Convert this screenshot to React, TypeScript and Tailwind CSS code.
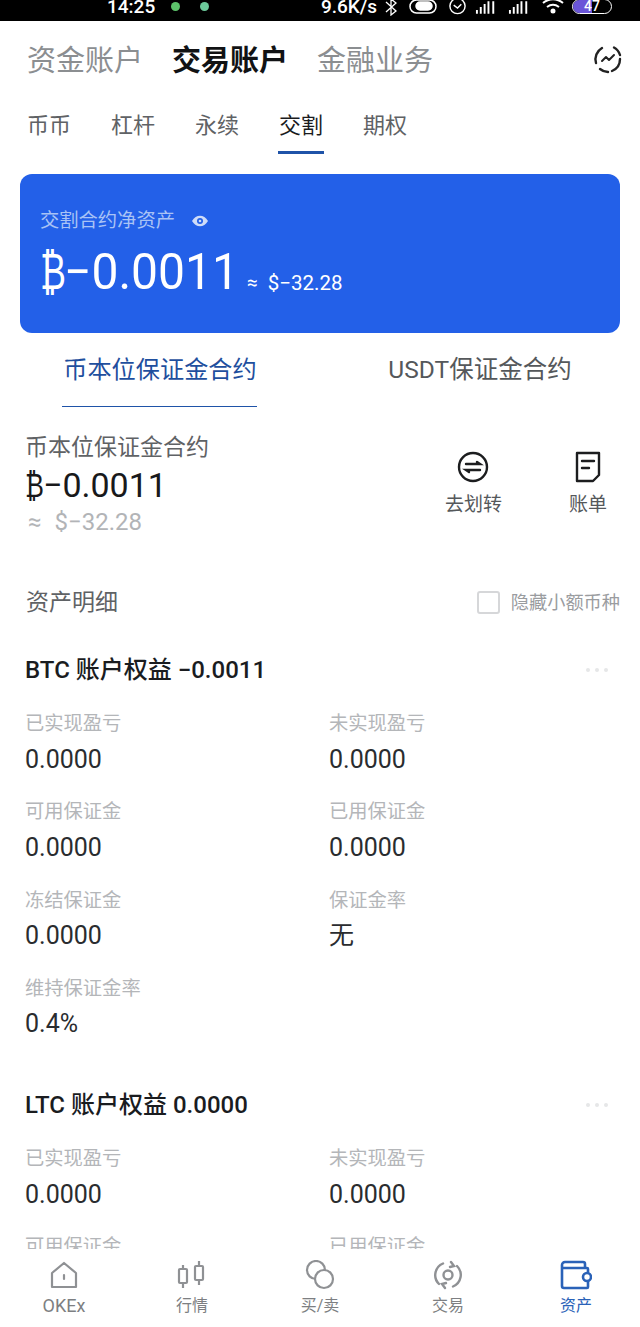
import React from "react";

const font = { fontFamily: '"Roboto","Noto Sans CJK SC","DejaVu Sans",sans-serif' };

function Metric({ label, value }: { label: string; value: string }) {
  return (
    <div className="h-[88.3px]">
      <div className="h-[30px] text-[19.3px] leading-[30px] text-[#b4b6b9]">{label}</div>
      <div className="mt-[5.5px] h-[30px] text-[25px] leading-[30px] text-[#2a2c2f]">{value}</div>
    </div>
  );
}

function Account({ title, items }: { title: string; items: [string, string][] }) {
  return (
    <section>
      <div className="flex h-[36px] items-center justify-between pr-[30px]">
        <div className="text-[24px] font-medium leading-[36px] text-[#1a1c1f]">{title}</div>
        <div className="flex gap-[5px] pr-[2px]">
          <span className="h-[4px] w-[4px] rounded-full bg-[#e6e7e8]" />
          <span className="h-[4px] w-[4px] rounded-full bg-[#e6e7e8]" />
          <span className="h-[4px] w-[4px] rounded-full bg-[#e6e7e8]" />
        </div>
      </div>
      <div className="mt-[21px] grid grid-cols-[304px_1fr]">
        {items.map(([l, v], i) => (
          <Metric key={i} label={l} value={v} />
        ))}
      </div>
    </section>
  );
}

function StatusBar() {
  return (
    <div className="relative h-[21px] shrink-0 overflow-hidden bg-black text-white">
      <div className="flex h-[13px] items-center justify-between pl-[107px] pr-[28px] text-[19px] font-medium leading-[13px]">
        <div className="flex items-center">
          <span>14:25</span>
          <span className="ml-[16px] h-[9px] w-[9px] rounded-full bg-[#5cc26a]" />
          <span className="ml-[20px] h-[9px] w-[9px] rounded-full bg-[#6cc99a]" />
        </div>
        <div className="flex items-center">
          <span>9.6K/s</span>
          <svg className="ml-[7px]" width="14" height="18" viewBox="0 0 14 18" fill="none" stroke="#fff" strokeWidth="1.3"><path d="M2 4l10 9-5 4V1l5 4-10 9" /></svg>
          <svg className="ml-[11px]" width="28" height="16" viewBox="0 0 28 16" fill="none" stroke="#fff" strokeWidth="1.5"><rect x="1" y="1" width="26" height="13" rx="6.5" /><rect x="7" y="3" width="16" height="8" rx="4" fill="#fff" /></svg>
          <svg className="ml-[11px]" width="19" height="18" viewBox="0 0 20 18" fill="none" stroke="#fff" strokeWidth="1.5"><circle cx="10" cy="8" r="8" /><path d="M6 7l4 3 4-4" /></svg>
          <svg className="ml-[8px]" width="25" height="14" viewBox="0 0 26 14" fill="#fff"><path d="M1 10h2v4H1zM5 7h2v7H5zM9 4h2v10H9zM13 1h2v13h-2zM18 1h2v13h-2z" /></svg>
          <svg className="ml-[8px]" width="25" height="14" viewBox="0 0 26 14" fill="#fff"><path d="M1 10h2v4H1zM5 7h2v7H5zM9 4h2v10H9zM13 1h2v13h-2zM18 1h2v13h-2z" /></svg>
          <svg className="ml-[8px]" width="26" height="18" viewBox="0 0 26 18" fill="none" stroke="#fff" strokeWidth="2"><path d="M2 5c6-5 14-5 20 0M6 9c4-3 8-3 12 0" /><circle cx="12" cy="13" r="1.5" fill="#fff" /></svg>
          <div className="relative ml-[5px] flex h-[15px] w-[40px] items-center justify-center overflow-hidden rounded-[8px] border border-white text-[14px] leading-[13px]">
            <span className="absolute bottom-0 left-0 top-0 w-[19px] bg-[#6a55d8]" />
            <span className="relative">47</span>
          </div>
        </div>
      </div>
    </div>
  );
}

function Nav({ label, active, wide, children }: { label: string; active?: boolean; wide?: boolean; children: React.ReactNode }) {
  return (
    <div className="flex flex-col items-center">
      <div className="flex h-[36px] items-center justify-center">{children}</div>
      <div className={`mt-[2px] leading-[22px] ${wide ? "text-[18px]" : "text-[16px]"} ${active ? "text-[#2a62b8]" : "text-[#7d7f82]"}`}>{label}</div>
    </div>
  );
}

export default function App() {
  return (
    <div style={font} className="flex h-[1327px] w-[640px] flex-col overflow-hidden bg-white">
      <StatusBar />
      <header className="flex h-[77px] shrink-0 items-center justify-between pl-[27px] pr-[17px] pt-[2px]">
        <div className="flex gap-[29px] text-[29px] leading-[40px]">
          <span className="text-[#8b8e91]">资金账户</span>
          <span className="font-bold text-[#111214]">交易账户</span>
          <span className="text-[#8b8e91]">金融业务</span>
        </div>
        <svg className="-translate-y-[2px]" width="30" height="30" viewBox="0 0 30 30" fill="none" stroke="#222" strokeWidth="2.4" strokeLinecap="round" strokeLinejoin="round">
          <path d="M3 19A13 13 0 0 1 9 4M21 3.5A13 13 0 0 1 27 11M27 15A13 13 0 0 1 19 27M15 28A13 13 0 0 1 7 25" />
          <path d="M9 17l4-4 3 3 5-5" strokeWidth="2" />
        </svg>
      </header>
      <nav className="flex h-[56px] shrink-0 gap-[40px] pl-[27px] text-[22px] leading-[56px] text-[#5f6265]">
        <span>币币</span>
        <span>杠杆</span>
        <span>永续</span>
        <span className="relative h-[56px] text-[#1a1b1d]">
          交割
          <span className="absolute bottom-0 left-[-1px] right-[-1px] h-[3px] bg-[#1f53a8]" />
        </span>
        <span>期权</span>
      </nav>
      <div className="mx-[20px] mt-[20px] h-[159px] shrink-0 rounded-[12px] bg-[#2360e8] pl-[20px] text-white">
        <div className="flex h-[24px] translate-y-[35px] items-center text-[19.3px] leading-[24px] text-[#a9c3f5]">
          交割合约净资产
          <svg className="ml-[16px]" width="18" height="14" viewBox="0 0 18 14"><path d="M1 7c4-7 12-7 16 0-4 7-12 7-16 0z" fill="#cfdcf8" /><circle cx="9" cy="7" r="3" fill="#2360e8" /><circle cx="9" cy="7" r="1.3" fill="#cfdcf8" /></svg>
        </div>
        <div className="mt-[44px] flex h-[60px] items-baseline">
          <span className="inline-block w-[24px] origin-left scale-x-[0.7] text-[50px] leading-[60px]">₿</span>
          <span className="inline-block w-[171px] origin-left scale-x-[0.96] whitespace-nowrap text-[50px] leading-[60px]">−0.0011</span>
          <span className="ml-[12px] text-[19px]">≈</span>
          <span className="ml-[10px] translate-y-[1px] text-[20.5px]">$−32.28</span>
        </div>
      </div>
      <div className="grid h-[71px] shrink-0 grid-cols-2">
        <div className="relative flex justify-center text-[24.2px] leading-[74px] text-[#1f4f9e]">
          币本位保证金合约
          <span className="absolute bottom-0 left-[62px] h-[1px] w-[195px] bg-[#1f53a8]" />
        </div>
        <div className="flex justify-center text-[24.5px] leading-[74px] text-[#55585b]">USDT保证金合约</div>
      </div>
      <div className="flex h-[166px] shrink-0 items-start justify-between pl-[25px] pr-[33px]">
        <div className="pt-[29px]">
          <div className="text-[23px] leading-[30px] text-[#5f6265]">币本位保证金合约</div>
          <div className="flex h-[44px] items-baseline text-[34px] leading-[44px] text-[#18191b]">
            <span className="inline-block w-[18px] origin-left scale-x-[0.75]">₿</span>
            <span className="whitespace-nowrap">−0.0011</span>
          </div>
          <div className="flex text-[24px] leading-[30px] text-[#b2b4b7]">
            <span className="ml-[3px]">≈</span>
            <span className="ml-[13px]">$−32.28</span>
          </div>
        </div>
        <div className="flex gap-[67px] pt-[47px] text-[19px] leading-[24px] text-[#55585b]">
          <div className="flex flex-col items-center">
            <svg width="32" height="32" viewBox="0 0 32 32" fill="none" stroke="#1c1d1f" strokeWidth="2.4"><circle cx="16" cy="16" r="14" /><path d="M9 13h14l-3-2M23 19H9l3 2" strokeLinecap="round" /></svg>
            <span className="mt-[10px]">去划转</span>
          </div>
          <div className="flex flex-col items-center">
            <svg width="28" height="32" viewBox="0 0 28 32" fill="none" stroke="#1c1d1f" strokeWidth="2.4" strokeLinejoin="round"><path d="M3 2h22v22l-6 6H3z" /><path d="M8 10h12M8 17h7" strokeLinecap="round" /></svg>
            <span className="mt-[10px]">账单</span>
          </div>
        </div>
      </div>
      <div className="flex h-[66px] shrink-0 items-center justify-between pl-[26px] pr-[20px]">
        <span className="text-[23px] text-[#5f6265]">资产明细</span>
        <div className="flex items-center gap-[11px] text-[18.2px] text-[#9a9c9f]">
          <span className="h-[23px] w-[23px] rounded-[3px] border-2 border-[#d6d7d9]" />
          隐藏小额币种
        </div>
      </div>
      <main className="min-h-0 flex-1 overflow-hidden pl-[25px] pt-[16px]">
        <Account
          title="BTC 账户权益 −0.0011"
          items={[
            ["已实现盈亏", "0.0000"],
            ["未实现盈亏", "0.0000"],
            ["可用保证金", "0.0000"],
            ["已用保证金", "0.0000"],
            ["冻结保证金", "0.0000"],
            ["保证金率", "无"],
            ["维持保证金率", "0.4%"],
          ]}
        />
        <div className="h-[25px]" />
        <Account
          title="LTC 账户权益 0.0000"
          items={[
            ["已实现盈亏", "0.0000"],
            ["未实现盈亏", "0.0000"],
            ["可用保证金", "0.0000"],
            ["已用保证金", "0.0000"],
          ]}
        />
      </main>
      <footer className="grid h-[78px] shrink-0 grid-cols-5 bg-white pt-[8px]">
        <Nav label="OKEx" wide>
          <svg width="30" height="30" viewBox="0 0 30 30" fill="none" stroke="#8f9194" strokeWidth="2.2" strokeLinejoin="round"><path d="M3 13L15 3l12 10v14H3z" /><path d="M15 15v4" strokeLinecap="round" /></svg>
        </Nav>
        <Nav label="行情">
          <svg width="30" height="30" viewBox="0 0 30 30" fill="none" stroke="#8f9194" strokeWidth="2.2"><rect x="2" y="9" width="8" height="14" rx="1" /><rect x="18" y="6" width="8" height="14" rx="1" /><path d="M6 5v4M6 23v5M22 1v5M22 20v5" /></svg>
        </Nav>
        <Nav label="买/卖">
          <svg width="30" height="30" viewBox="0 0 30 30" fill="none" stroke="#8f9194" strokeWidth="2.2"><circle cx="11" cy="10" r="9" /><circle cx="19" cy="19" r="9" fill="#fff" /></svg>
        </Nav>
        <Nav label="交易">
          <svg width="30" height="32" viewBox="0 0 30 32" fill="none" stroke="#8f9194" strokeWidth="2.4" strokeLinecap="round"><circle cx="15" cy="16" r="4.5" /><path d="M10 4.5A12.5 12.5 0 0 0 6 25M20 27.5A12.5 12.5 0 0 0 24 7" /><path d="M18 3l3 4-4 1M12 29l-3-4 4-1" /></svg>
        </Nav>
        <Nav label="资产" active>
          <svg width="32" height="30" viewBox="0 0 32 30" fill="none" stroke="#2a62b8" strokeWidth="2.6" strokeLinejoin="round"><path d="M5 2h18a2 2 0 0 1 2 2v4M3 8h24a1 1 0 0 1 1 1v18a1 1 0 0 1-1 1H4a2 2 0 0 1-2-2V5a3 3 0 0 1 3-3" /><rect x="23" y="13" width="8" height="8" rx="4" fill="#fff" /></svg>
        </Nav>
      </footer>
    </div>
  );
}
